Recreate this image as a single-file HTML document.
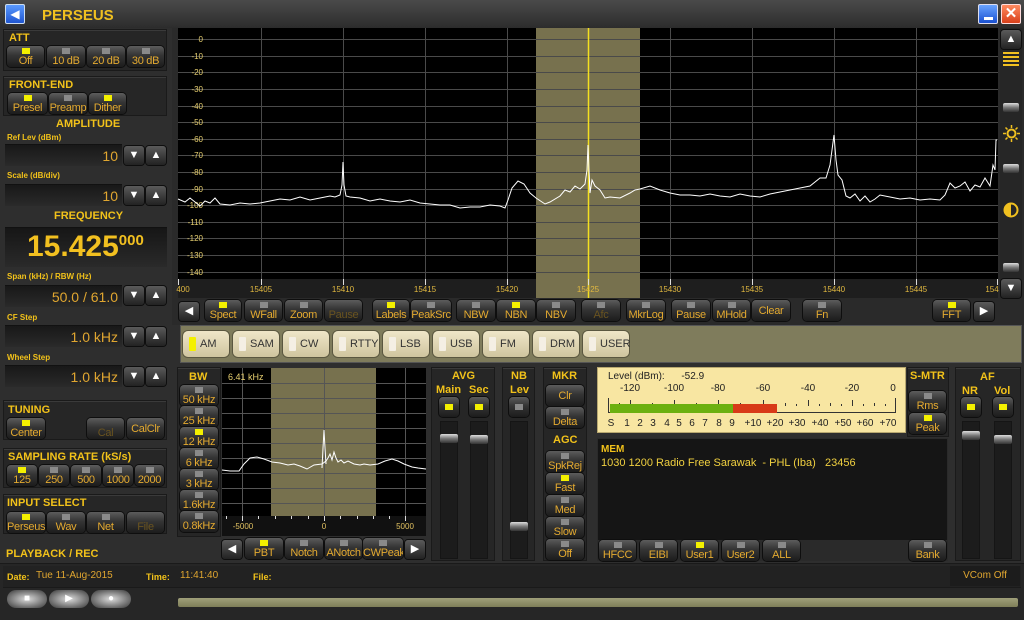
<!DOCTYPE html><html><head><meta charset="utf-8"><style>
*{margin:0;padding:0;box-sizing:border-box}
body{width:1024px;height:620px;overflow:hidden;background:#2e2e2e;font-family:"Liberation Sans",sans-serif;position:relative}
div,span{position:absolute}
.p{background:#262626;border:1px solid #1a1a1a;box-shadow:inset 0 1px 0 #3a3a3a}
.lb{color:#f2c21a;font-weight:bold;font-size:11px}
.sl{color:#f2c21a;font-weight:bold;font-size:8px}
.b{height:21px;background:linear-gradient(#5c5c5c,#343434 45%,#1c1c1c);border-radius:4px;box-shadow:0 0 0 1px #0e0e0e;color:#e4aa30;font-size:11px;text-align:center;padding-top:9px;line-height:12px;white-space:nowrap;overflow:hidden;letter-spacing:-0.3px}
.b i{position:absolute;left:50%;top:2px;width:8px;height:6px;margin-left:-4px;background:#8a8a8a}
.b i.y{background:#f4f000}
.b.d{color:#6a5420}
.a{width:20px;height:19px;background:linear-gradient(#5a5a5a,#222);border-radius:3px;box-shadow:0 0 0 1px #0e0e0e;color:#fff;font-size:11px;text-align:center;line-height:19px}
.f{background:linear-gradient(#181818,#2a2a2a);border-top:1px solid #111;color:#e0a630;font-size:14px;text-align:right;padding-right:4px;height:22px;line-height:22px}
.m{top:331px;width:46px;height:26px;background:linear-gradient(#efe6c8,#cfc59f);border-radius:5px;box-shadow:0 0 0 1px #5a5740;color:#333;font-size:11px;line-height:26px;padding-left:17px}
.m i{position:absolute;left:6px;top:6px;width:7px;height:14px;background:#f4efe4;border-radius:1px}
.m i.y{background:#f4f000}
.tr{background:#1c1c1c;border:1px solid #151515}
.kn{height:9px;background:linear-gradient(#ddd,#777 50%,#333);border-radius:2px}
.sm{font-size:10px;color:#222;transform:translateX(-50%);white-space:nowrap}
</style></head><body>
<div style="left:0;top:0;width:1024px;height:28px;background:linear-gradient(#4a4a4a,#2c2c2c)"></div>
<div style="left:5px;top:4px;width:20px;height:20px;background:linear-gradient(#5a9aff,#1f55d0);border:1px solid #cde;border-radius:2px;color:#fff;font-size:12px;text-align:center;line-height:18px">◀</div>
<div class="lb" style="left:42px;top:7px;font-size:15px;color:#f0c020">PERSEUS</div>
<div style="left:978px;top:4px;width:20px;height:20px;background:linear-gradient(#6aa4ff,#1a50d0);border:1px solid #dde;border-radius:2px"><span style="left:5px;top:12px;width:9px;height:3px;background:#fff"></span></div>
<div style="left:1001px;top:4px;width:20px;height:20px;background:linear-gradient(#ff8a60,#d8401a);border:1px solid #fdd;border-radius:2px;color:#fff;font-size:15px;text-align:center;line-height:18px;font-weight:bold">✕</div>

<div class="p" style="left:3px;top:29px;width:164px;height:42px"></div>
<div class="lb" style="left:9px;top:32px">ATT</div>
<div class="b" style="left:7px;top:46px;width:37px"><i class="y"></i>Off</div>
<div class="b" style="left:47px;top:46px;width:38px"><i></i>10 dB</div>
<div class="b" style="left:87px;top:46px;width:38px"><i></i>20 dB</div>
<div class="b" style="left:127px;top:46px;width:37px"><i></i>30 dB</div>
<div class="p" style="left:3px;top:76px;width:164px;height:40px"></div>
<div class="lb" style="left:9px;top:79px">FRONT-END</div>
<div class="b" style="left:8px;top:93px;width:39px"><i class="y"></i>Presel</div>
<div class="b" style="left:49px;top:93px;width:38px"><i></i>Preamp</div>
<div class="b" style="left:89px;top:93px;width:37px"><i class="y"></i>Dither</div>
<div class="lb" style="left:56px;top:118px">AMPLITUDE</div>
<div class="sl" style="left:7px;top:133px">Ref Lev (dBm)</div>
<div class="f" style="left:5px;top:144px;width:117px">10</div>
<div class="a" style="left:124px;top:146px">▼</div><div class="a" style="left:146px;top:146px">▲</div>
<div class="sl" style="left:7px;top:171px">Scale (dB/div)</div>
<div class="f" style="left:5px;top:184px;width:117px">10</div>
<div class="a" style="left:124px;top:186px">▼</div><div class="a" style="left:146px;top:186px">▲</div>
<div class="lb" style="left:54px;top:210px">FREQUENCY</div>
<div style="left:5px;top:227px;width:162px;height:40px;background:linear-gradient(#161616,#2a2a2a);border-top:1px solid #111"></div>
<div style="left:27px;top:229px;color:#f2c020;font-size:30px;font-weight:bold;line-height:36px">15.425<span style="position:relative;font-size:15px;vertical-align:top;line-height:24px">000</span></div>
<div class="sl" style="left:7px;top:272px">Span (kHz) / RBW (Hz)</div>
<div class="f" style="left:5px;top:285px;width:117px">50.0 / 61.0</div>
<div class="a" style="left:124px;top:286px">▼</div><div class="a" style="left:146px;top:286px">▲</div>
<div class="sl" style="left:7px;top:313px">CF Step</div>
<div class="f" style="left:5px;top:325px;width:117px">1.0 kHz</div>
<div class="a" style="left:124px;top:327px">▼</div><div class="a" style="left:146px;top:327px">▲</div>
<div class="sl" style="left:7px;top:353px">Wheel Step</div>
<div class="f" style="left:5px;top:365px;width:117px">1.0 kHz</div>
<div class="a" style="left:124px;top:367px">▼</div><div class="a" style="left:146px;top:367px">▲</div>
<div class="p" style="left:3px;top:400px;width:164px;height:40px"></div>
<div class="lb" style="left:8px;top:404px">TUNING</div>
<div class="b" style="left:7px;top:418px;width:38px"><i class="y"></i>Center</div>
<div class="b d" style="left:87px;top:418px;width:37px">Cal</div>
<div class="b" style="left:127px;top:418px;width:37px;padding-top:5px">CalClr</div>
<div class="p" style="left:3px;top:448px;width:164px;height:40px"></div>
<div class="lb" style="left:8px;top:451px">SAMPLING RATE (kS/s)</div>
<div class="b" style="left:7px;top:465px;width:30px"><i class="y"></i>125</div>
<div class="b" style="left:39px;top:465px;width:30px"><i></i>250</div>
<div class="b" style="left:71px;top:465px;width:30px"><i></i>500</div>
<div class="b" style="left:103px;top:465px;width:30px"><i></i>1000</div>
<div class="b" style="left:135px;top:465px;width:29px"><i></i>2000</div>
<div class="p" style="left:3px;top:494px;width:164px;height:40px"></div>
<div class="lb" style="left:7px;top:497px">INPUT SELECT</div>
<div class="b" style="left:7px;top:512px;width:38px"><i class="y"></i>Perseus</div>
<div class="b" style="left:47px;top:512px;width:38px"><i></i>Wav</div>
<div class="b" style="left:87px;top:512px;width:37px"><i></i>Net</div>
<div class="b d" style="left:127px;top:512px;width:37px">File</div>
<div class="lb" style="left:6px;top:548px">PLAYBACK / REC</div>

<div style="left:0;top:563px;width:1024px;height:57px;background:#262626;border-top:1px solid #1a1a1a"></div>
<div style="left:3px;top:566px;width:1018px;height:22px;background:#222;border-bottom:1px solid #1a1a1a"></div>
<div class="sl" style="left:7px;top:572px;font-size:9px">Date:</div>
<div style="left:36px;top:570px;color:#e0a630;font-size:10px">Tue 11-Aug-2015</div>
<div class="sl" style="left:146px;top:572px;font-size:9px">Time:</div>
<div style="left:180px;top:570px;color:#e0a630;font-size:10px">11:41:40</div>
<div class="sl" style="left:253px;top:572px;font-size:9px">File:</div>
<div style="left:950px;top:566px;width:70px;height:20px;background:#1c1c1c;color:#e0a630;font-size:10px;text-align:center;line-height:20px">VCom Off</div>
<div style="left:7px;top:590px;width:40px;height:18px;border-radius:9px;background:radial-gradient(#ddd,#666 70%,#333);color:#fff;text-align:center;font-size:10px;line-height:18px">■</div>
<div style="left:49px;top:590px;width:40px;height:18px;border-radius:9px;background:radial-gradient(#ddd,#666 70%,#333);color:#fff;text-align:center;font-size:10px;line-height:18px">▶</div>
<div style="left:91px;top:590px;width:40px;height:18px;border-radius:9px;background:radial-gradient(#ddd,#666 70%,#333);color:#fff;text-align:center;font-size:10px;line-height:18px">●</div>
<div style="left:178px;top:598px;width:840px;height:9px;background:linear-gradient(#a0a07a,#7e7e58);border-radius:2px"></div>

<div style="left:172px;top:28px;width:852px;height:297px;background:#2a2a2a"></div>
<svg style="position:absolute;left:0;top:0" width="1024" height="300">
<rect x="178" y="28" width="820" height="251" fill="#000"/>
<rect x="536" y="28" width="104" height="270" fill="#77714e"/>
<g stroke="#4a4a4a" stroke-width="1">
<path d="M178 39.5h820M178 56.5h820M178 72.5h820M178 89.5h820M178 106.5h820M178 122.5h820M178 139.5h820M178 155.5h820M178 172.5h820M178 189.5h820M178 205.5h820M178 222.5h820M178 238.5h820M178 255.5h820M178 272.5h820"/>
<path d="M261.5 28v251M343.5 28v251M425.5 28v251M507.5 28v251M670.5 28v251M752.5 28v251M834.5 28v251M916.5 28v251"/>
</g>
<line x1="588.5" x2="588.5" y1="28" y2="298" stroke="#f4e020" stroke-width="1.5"/>
<g fill="#e8d070" font-family="Liberation Sans" font-size="8" text-anchor="end">
<text x="203" y="42">0</text><text x="203" y="59">-10</text><text x="203" y="75">-20</text><text x="203" y="92">-30</text><text x="203" y="109">-40</text><text x="203" y="125">-50</text><text x="203" y="142">-60</text><text x="203" y="158">-70</text><text x="203" y="175">-80</text><text x="203" y="192">-90</text><text x="203" y="208">-100</text><text x="203" y="225">-110</text><text x="203" y="241">-120</text><text x="203" y="258">-130</text><text x="203" y="275">-140</text>
</g>
<polyline fill="none" stroke="#fff" stroke-width="1" points="178,199 185,202 190,198 195,202 200,206 205,201 210,203 215,198 220,204 230,205 240,203 250,204 260,203 270,201 280,199 290,200 300,197 310,200 320,198 330,196 335,197 340,195 342,185 343,162 344,185 346,196 350,197 360,198 370,201 380,199 390,201 400,202 410,200 420,203 430,204 440,205 450,205 460,208 470,207 480,207 490,205 500,206 505,208 508,200 512,188 518,181 524,184 530,193 536,198 545,204 550,202 560,196 565,190 570,192 575,186 580,189 585,184 587,170 588,145 589,170 590,193 592,180 595,186 600,190 605,198 610,197 620,198 630,193 635,190 640,189 650,186 660,190 670,193 680,195 690,195 700,196 710,194 720,196 730,197 740,194 750,196 760,197 770,194 780,192 790,190 800,188 810,186 820,178 826,178 830,165 834,135 836,160 838,175 842,180 846,196 850,198 855,194 860,201 865,196 870,202 875,199 880,195 890,197 900,199 910,198 920,200 930,199 940,200 945,195 950,183 955,188 960,186 965,182 970,191 975,185 980,187 985,178 990,186 993,165 995,170 996,140 997,140"/>
<rect x="178" y="279" width="358" height="19" fill="#1e1e1e"/><rect x="640" y="279" width="358" height="19" fill="#1e1e1e"/>
<g stroke="#ddd"><path d="M178.5 279v6M261.5 279v6M343.5 279v6M425.5 279v6M507.5 279v6M588.5 279v6M670.5 279v6M752.5 279v6M834.5 279v6M916.5 279v6M997.5 279v6"/></g>
<g fill="#e0b840" font-family="Liberation Sans" font-size="8" text-anchor="middle">
<text x="183" y="292">400</text><text x="261" y="292">15405</text><text x="343" y="292">15410</text><text x="425" y="292">15415</text><text x="507" y="292">15420</text><text x="588" y="292">15425</text><text x="670" y="292">15430</text><text x="752" y="292">15435</text><text x="834" y="292">15440</text><text x="916" y="292">15445</text><text x="992" y="292">154</text>
</g>
</svg>
<div style="left:1000px;top:28px;width:22px;height:270px;background:#262626"></div>
<div class="a" style="left:1001px;top:30px;width:20px">▲</div>
<div style="left:1003px;top:52px;width:16px;height:14px;background:repeating-linear-gradient(#f0c020 0 2px,transparent 2px 4px)"></div>
<div class="kn" style="left:1003px;top:103px;width:16px"></div>
<svg style="position:absolute;left:1003px;top:125px" width="17" height="17"><circle cx="8.5" cy="8.5" r="4" fill="none" stroke="#f0c020" stroke-width="2"/><g stroke="#f0c020" stroke-width="1.5"><path d="M8.5 0v3M8.5 14v3M0 8.5h3M14 8.5h3M2.5 2.5l2 2M12.5 12.5l2 2M2.5 14.5l2-2M12.5 4.5l2-2"/></g></svg>
<div class="kn" style="left:1003px;top:164px;width:16px"></div>
<svg style="position:absolute;left:1003px;top:202px" width="16" height="16"><circle cx="8" cy="8" r="6.5" fill="none" stroke="#f0c020" stroke-width="2"/><path d="M8 1.5a6.5 6.5 0 0 0 0 13z" fill="#f0c020"/></svg>
<div class="kn" style="left:1003px;top:263px;width:16px"></div>
<div class="a" style="left:1001px;top:279px;width:20px">▼</div>

<div class="a" style="left:179px;top:302px">◀</div>
<div class="b" style="left:205px;top:300px;width:36px"><i class="y"></i>Spect</div>
<div class="b" style="left:245px;top:300px;width:37px"><i></i>WFall</div>
<div class="b" style="left:285px;top:300px;width:37px"><i></i>Zoom</div>
<div class="b d" style="left:325px;top:300px;width:37px">Pause</div>
<div class="b" style="left:373px;top:300px;width:36px"><i class="y"></i>Labels</div>
<div class="b" style="left:411px;top:300px;width:40px"><i></i>PeakSrc</div>
<div class="b" style="left:457px;top:300px;width:38px"><i></i>NBW</div>
<div class="b" style="left:497px;top:300px;width:38px"><i class="y"></i>NBN</div>
<div class="b" style="left:537px;top:300px;width:38px"><i></i>NBV</div>
<div class="b d" style="left:582px;top:300px;width:38px"><i></i>Afc</div>
<div class="b" style="left:627px;top:300px;width:38px"><i></i>MkrLog</div>
<div class="b" style="left:672px;top:300px;width:38px"><i></i>Pause</div>
<div class="b" style="left:713px;top:300px;width:37px"><i></i>MHold</div>
<div class="b" style="left:752px;top:300px;width:38px;padding-top:5px">Clear</div>
<div class="b" style="left:803px;top:300px;width:38px"><i></i>Fn</div>
<div class="b" style="left:933px;top:300px;width:37px"><i class="y"></i>FFT</div>
<div class="a" style="left:974px;top:302px">▶</div>

<div style="left:180px;top:325px;width:842px;height:38px;background:#7f7c5c;border:1px solid #555"></div>
<div class="m" style="left:183px"><i class="y"></i>AM</div>
<div class="m" style="left:233px"><i></i>SAM</div>
<div class="m" style="left:283px"><i></i>CW</div>
<div class="m" style="left:333px"><i></i>RTTY</div>
<div class="m" style="left:383px"><i></i>LSB</div>
<div class="m" style="left:433px"><i></i>USB</div>
<div class="m" style="left:483px"><i></i>FM</div>
<div class="m" style="left:533px"><i></i>DRM</div>
<div class="m" style="left:583px"><i></i>USER</div>

<div class="p" style="left:177px;top:367px;width:44px;height:170px"></div>
<div class="lb" style="left:189px;top:371px">BW</div>
<div class="b" style="left:180px;top:385px;width:38px"><i></i>50 kHz</div>
<div class="b" style="left:180px;top:406px;width:38px"><i></i>25 kHz</div>
<div class="b" style="left:180px;top:427px;width:38px"><i class="y"></i>12 kHz</div>
<div class="b" style="left:180px;top:448px;width:38px"><i></i>6 kHz</div>
<div class="b" style="left:180px;top:469px;width:38px"><i></i>3 kHz</div>
<div class="b" style="left:180px;top:490px;width:38px"><i></i>1.6kHz</div>
<div class="b" style="left:180px;top:511px;width:38px"><i></i>0.8kHz</div>
<svg style="position:absolute;left:222px;top:368px" width="204" height="168">
<rect width="204" height="168" fill="#000"/>
<rect x="49" y="0" width="105" height="148" fill="#77714e"/>
<g stroke="#555"><path d="M0 15.5h204M0 30.5h204M0 45.5h204M0 60.5h204M0 75.5h204M0 90.5h204M0 105.5h204M0 120.5h204M0 135.5h204M20.5 0v148M102.5 0v148M183.5 0v148"/></g>
<polyline fill="none" stroke="#fff" points="0,102 8,103 17,103 22,96 28,90 35,89 42,91 50,94 58,95 66,97 72,96 78,98 85,101 92,97 100,96 104,93 106,90 108,86 110,92 112,84 114,90 116,94 119,92 122,95 126,93 132,96 138,97 142,96 148,97 156,96 163,93 170,91 176,93 182,96 190,99 196,100 204,101"/>
<polyline fill="none" stroke="#fff" points="100,100 101,80 102,62 103,80 104,96"/>
<rect x="0" y="148" width="204" height="20" fill="#111"/>
<g stroke="#ddd"><path d="M20.5 148v5M102.5 148v5M183.5 148v5M4.5 148v3M36.5 148v3M53.5 148v3M69.5 148v3M86.5 148v3M118.5 148v3M135.5 148v3M151.5 148v3M167.5 148v3"/></g>
<g fill="#e0c060" font-family="Liberation Sans" font-size="8" text-anchor="middle"><text x="21" y="161">-5000</text><text x="102" y="161">0</text><text x="183" y="161">5000</text></g>
<text x="6" y="12" fill="#e8d070" font-family="Liberation Sans" font-size="9">6.41 kHz</text>
</svg>
<div class="a" style="left:222px;top:540px">◀</div>
<div class="b" style="left:245px;top:538px;width:38px"><i class="y"></i>PBT</div>
<div class="b" style="left:285px;top:538px;width:38px"><i></i>Notch</div>
<div class="b" style="left:325px;top:538px;width:37px"><i></i>ANotch</div>
<div class="b" style="left:363px;top:538px;width:40px"><i></i>CWPeak</div>
<div class="a" style="left:405px;top:540px">▶</div>

<div class="p" style="left:431px;top:367px;width:64px;height:194px"></div>
<div class="lb" style="left:452px;top:370px">AVG</div>
<div class="lb" style="left:436px;top:384px">Main</div><div class="lb" style="left:469px;top:384px">Sec</div>
<div class="b" style="left:439px;top:397px;width:20px;height:20px;padding:0"><i class="y" style="top:7px"></i></div>
<div class="b" style="left:469px;top:397px;width:20px;height:20px;padding:0"><i class="y" style="top:7px"></i></div>
<div class="tr" style="left:440px;top:421px;width:18px;height:138px"></div>
<div class="tr" style="left:470px;top:421px;width:18px;height:138px"></div>
<div class="kn" style="left:440px;top:434px;width:18px"></div>
<div class="kn" style="left:470px;top:435px;width:18px"></div>
<div class="p" style="left:502px;top:367px;width:33px;height:194px"></div>
<div class="lb" style="left:511px;top:370px">NB</div><div class="lb" style="left:510px;top:384px">Lev</div>
<div class="b" style="left:509px;top:397px;width:20px;height:20px;padding:0"><i style="top:7px"></i></div>
<div class="tr" style="left:510px;top:421px;width:18px;height:138px"></div>
<div class="kn" style="left:510px;top:522px;width:18px"></div>
<div class="p" style="left:543px;top:367px;width:44px;height:194px"></div>
<div class="lb" style="left:552px;top:370px">MKR</div>
<div class="b" style="left:546px;top:385px;width:38px;padding-top:5px">Clr</div>
<div class="b" style="left:546px;top:407px;width:38px"><i></i>Delta</div>
<div class="lb" style="left:553px;top:434px">AGC</div>
<div class="b" style="left:546px;top:451px;width:38px"><i></i>SpkRej</div>
<div class="b" style="left:546px;top:473px;width:38px"><i class="y"></i>Fast</div>
<div class="b" style="left:546px;top:495px;width:38px"><i></i>Med</div>
<div class="b" style="left:546px;top:517px;width:38px"><i></i>Slow</div>
<div class="b" style="left:546px;top:539px;width:38px"><i></i>Off</div>

<div style="left:597px;top:367px;width:309px;height:66px;background:#f8e6a2;border:1px solid #b8a870"></div>
<div style="left:608px;top:371px;font-size:10px;color:#222;white-space:pre">Level (dBm):      -52.9</div>
<div class="sm" style="left:630px;top:383px">-120</div><div class="sm" style="left:674px;top:383px">-100</div><div class="sm" style="left:718px;top:383px">-80</div><div class="sm" style="left:763px;top:383px">-60</div><div class="sm" style="left:808px;top:383px">-40</div><div class="sm" style="left:852px;top:383px">-20</div><div class="sm" style="left:893px;top:383px">0</div>
<svg style="position:absolute;left:608px;top:396px" width="288" height="20"><path d="M0.5 2v14.5h287v-14.5" fill="none" stroke="#333"/><g stroke="#333"><path d="M22.5 4v6M66.5 4v6M110.5 4v6M155.5 4v6M200.5 4v6M244.5 4v6M11.5 7v3M44.5 7v3M88.5 7v3M132.5 7v3M177.5 7v3M222.5 7v3M266.5 7v3M33.5 8v2M55.5 8v2M77.5 8v2M99.5 8v2M121.5 8v2M144.5 8v2M166.5 8v2M188.5 8v2M211.5 8v2M233.5 8v2M255.5 8v2M277.5 8v2"/></g><rect x="2" y="8" width="123" height="9" fill="#6cb010"/><rect x="125" y="8" width="44" height="9" fill="#d83a18"/></svg>
<div class="sm" style="left:611px;top:418px">S</div><div class="sm" style="left:627px;top:418px">1</div><div class="sm" style="left:640px;top:418px">2</div><div class="sm" style="left:653px;top:418px">3</div><div class="sm" style="left:667px;top:418px">4</div><div class="sm" style="left:679px;top:418px">5</div><div class="sm" style="left:692px;top:418px">6</div><div class="sm" style="left:705px;top:418px">7</div><div class="sm" style="left:719px;top:418px">8</div><div class="sm" style="left:732px;top:418px">9</div><div class="sm" style="left:753px;top:418px">+10</div><div class="sm" style="left:775px;top:418px">+20</div><div class="sm" style="left:797px;top:418px">+30</div><div class="sm" style="left:820px;top:418px">+40</div><div class="sm" style="left:843px;top:418px">+50</div><div class="sm" style="left:865px;top:418px">+60</div><div class="sm" style="left:888px;top:418px">+70</div>
<div class="p" style="left:907px;top:367px;width:42px;height:70px"></div>
<div class="lb" style="left:910px;top:370px">S-MTR</div>
<div class="b" style="left:909px;top:391px;width:37px"><i></i>Rms</div>
<div class="b" style="left:909px;top:413px;width:37px"><i class="y"></i>Peak</div>
<div class="p" style="left:955px;top:367px;width:66px;height:194px"></div>
<div class="lb" style="left:980px;top:371px">AF</div>
<div class="lb" style="left:962px;top:385px">NR</div><div class="lb" style="left:994px;top:385px">Vol</div>
<div class="b" style="left:961px;top:397px;width:20px;height:20px;padding:0"><i class="y" style="top:7px"></i></div>
<div class="b" style="left:993px;top:397px;width:20px;height:20px;padding:0"><i class="y" style="top:7px"></i></div>
<div class="tr" style="left:962px;top:421px;width:18px;height:138px"></div>
<div class="tr" style="left:994px;top:421px;width:18px;height:138px"></div>
<div class="kn" style="left:962px;top:431px;width:18px"></div>
<div class="kn" style="left:994px;top:435px;width:18px"></div>
<div style="left:597px;top:438px;width:351px;height:103px;background:#151515;border:1px solid #2a2a2a"></div>
<div class="lb" style="left:601px;top:444px;font-size:10px">MEM</div>
<div style="left:601px;top:457px;font-size:11px;color:#f0d040;white-space:pre">1030 1200 Radio Free Sarawak  - PHL (Iba)   23456</div>
<div style="left:597px;top:540px;width:351px;height:21px;background:#2a2a2a"></div>
<div class="b" style="left:599px;top:540px;width:37px"><i></i>HFCC</div>
<div class="b" style="left:640px;top:540px;width:37px"><i></i>EIBI</div>
<div class="b" style="left:681px;top:540px;width:37px"><i class="y"></i>User1</div>
<div class="b" style="left:722px;top:540px;width:37px"><i></i>User2</div>
<div class="b" style="left:763px;top:540px;width:37px"><i></i>ALL</div>
<div class="b" style="left:909px;top:540px;width:37px"><i></i>Bank</div>
</body></html>
